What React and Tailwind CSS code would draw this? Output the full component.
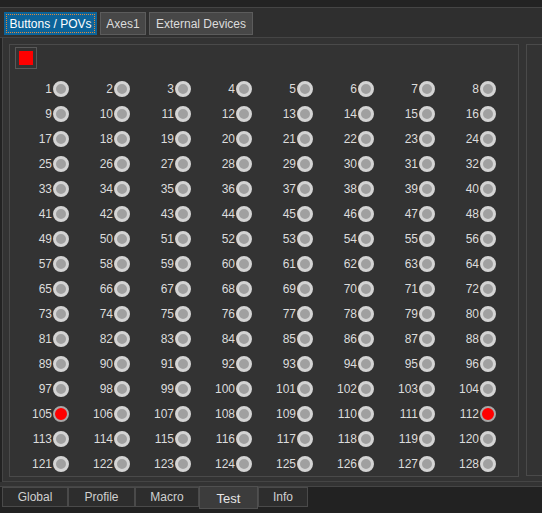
const FONT = { fontFamily: '"Liberation Sans", Arial, sans-serif' };

const TOP_TABS = [
  { label: 'Buttons / POVs', active: true, w: 'w-[93px]' },
  { label: 'Axes1', w: 'w-[46px]' },
  { label: 'External Devices', w: 'w-[104px]' },
];

const BOTTOM_TABS = [
  { label: 'Global', w: 'w-[66px]' },
  { label: 'Profile', w: 'w-[67px]' },
  { label: 'Macro', w: 'w-[64px]' },
  { label: 'Test', w: 'w-[59px]', active: true },
  { label: 'Info', w: 'w-[50px]' },
];

const PRESSED = new Set([105, 112]);

function Led({ on }) {
  return on ? (
    <span className="box-border h-[16px] w-[16px] rounded-full border-[2px] border-[#a8a8a8] bg-[#ff0000]" />
  ) : (
    <span className="box-border h-[16px] w-[16px] rounded-full border-[3px] border-[#d4d4d4] bg-[#a0a0a0]" />
  );
}

function ButtonCell({ n }) {
  return (
    <div className="flex h-[25px] items-center justify-end gap-[1px] pr-[2px]">
      <span className="text-[12px] leading-none text-[#dcdcdc]">{n}</span>
      <Led on={PRESSED.has(n)} />
    </div>
  );
}

export default function App() {
  const buttons = Array.from({ length: 128 }, (_, i) => i + 1);
  return (
    <div className="flex h-[513px] w-[542px] flex-col overflow-hidden bg-[#222222]" style={FONT}>
      <div className="h-[7px] bg-[#232323]" />
      <div className="flex h-[31px] items-start gap-[3px] border-y border-[#454545] bg-[#2f2f2f] pl-[4px] pt-[4px]">
        {TOP_TABS.map((t) =>
          t.active ? (
            <div
              key={t.label}
              className={`${t.w} flex h-[23px] items-center justify-center bg-[#0c6399] p-[2px]`}
            >
              <div className="flex h-full w-full items-center justify-center border border-dotted border-[#e08a3c] text-[12px] text-white">
                {t.label}
              </div>
            </div>
          ) : (
            <div
              key={t.label}
              className={`${t.w} flex h-[23px] items-center justify-center border border-[#5c5c5c] bg-[#474747] text-[12px] text-[#dcdcdc]`}
            >
              {t.label}
            </div>
          )
        )}
      </div>

      <div className="ml-[2px] flex h-[444px] border-l border-b border-[#454545] bg-[#333333]">
        <div className="ml-[6px] mt-[6px] h-[433px] w-[510px] border border-[#4a4a4a]">
          <div className="ml-[5px] mt-[2px] flex h-[22px] w-[22px] items-center justify-center border border-[#595959]">
            <span className="h-[14px] w-[14px] bg-[#ff0000]" />
          </div>
          <div className="mt-[7px] grid grid-cols-[repeat(8,61px)]">
            {buttons.map((n) => (
              <ButtonCell key={n} n={n} />
            ))}
          </div>
        </div>
        <div className="ml-[7px] mt-[6px] h-[432px] flex-1 border-l border-t border-b border-[#4a4a4a]" />
      </div>

      <div className="h-[5px] border-b border-[#454545] bg-[#333333]" />

      <div className="flex items-start pl-[2px]">
        {BOTTOM_TABS.map((t) =>
          t.active ? (
            <div
              key={t.label}
              className={`${t.w} -mt-[1px] flex h-[23px] items-center justify-center border border-[#505050] bg-[#3c3c3c] pt-[2px] text-[13px] text-[#e6e6e6]`}
            >
              {t.label}
            </div>
          ) : (
            <div
              key={t.label}
              className={`${t.w} flex h-[20px] items-center justify-center border border-[#4a4a4a] bg-[#2d2d2d] text-[12px] text-[#d0d0d0]`}
            >
              {t.label}
            </div>
          )
        )}
      </div>
    </div>
  );
}
